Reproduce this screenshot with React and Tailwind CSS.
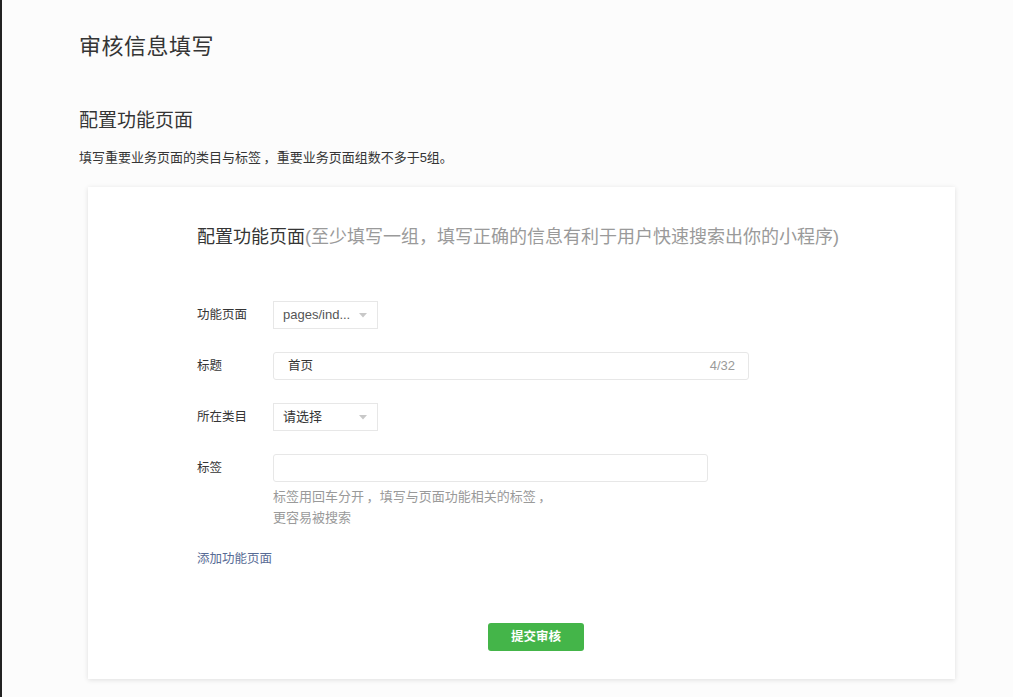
const font = { fontFamily: '"Liberation Sans", "Noto Sans CJK SC", sans-serif' };

const Comma = () => <span className="ml-[0.2em]">，</span>;

const Arrow = () => (
  <svg width="8" height="5" viewBox="0 0 8 5" className="shrink-0">
    <path d="M0 0 L8 0 L4 4.5 Z" fill="#c8c8c8" />
  </svg>
);

const Row = ({ label, children, className = "" }) => (
  <div className={`flex items-start ${className}`}>
    <div className="w-[76px] shrink-0 pt-[6px] text-[12.5px] leading-[16px] text-[#353535]">{label}</div>
    <div className="flex-1">{children}</div>
  </div>
);

const App = () => {
  return (
    <div
      className="min-h-[697px] w-full bg-[#fcfcfc] border-l-2 border-[#222] text-[#353535]"
      style={font}
    >
      <div className="pl-[77px] pr-[56px] pt-[32px]">
        <h1 className="text-[22px] leading-[30px] font-normal text-[#353535] tracking-[0.5px]">审核信息填写</h1>
        <h2 className="mt-[46px] text-[19px] leading-[26px] font-normal text-[#353535]">配置功能页面</h2>
        <p className="mt-[15px] text-[13px] leading-[18px] text-[#353535]">
          填写重要业务页面的类目与标签<Comma />重要业务页面组数不多于5组。
        </p>

        <div className="mt-[20px] ml-[9px] w-[867px] h-[492px] bg-white shadow-[0_1px_5px_rgba(0,0,0,0.12)] pl-[109px] pt-[37px]">
          <div className="text-[18px] leading-[26px]">
            <span className="text-[#353535]">配置功能页面</span>
            <span className="text-[#9a9a9a]">(至少填写一组，填写正确的信息有利于用户快速搜索出你的小程序)</span>
          </div>

          <div className="mt-[51px] flex flex-col gap-[23px]">
            <Row label="功能页面">
              <div className="flex h-[28px] w-[105px] items-center justify-between border border-[#e7e7e7] pl-[9px] pr-[10px] text-[13px] text-[#555]">
                <span>pages/ind...</span>
                <Arrow />
              </div>
            </Row>
            <Row label="标题">
              <div className="flex h-[28px] w-[476px] items-center justify-between rounded-[3px] border border-[#e7e7e7] pl-[14px] pr-[13px]">
                <span className="text-[12.5px] text-[#353535]">首页</span>
                <span className="text-[13px] text-[#9a9a9a]">4/32</span>
              </div>
            </Row>
            <Row label="所在类目">
              <div className="flex h-[28px] w-[105px] items-center justify-between border border-[#e7e7e7] pl-[9px] pr-[10px] text-[13px] text-[#353535]">
                <span>请选择</span>
                <Arrow />
              </div>
            </Row>
            <Row label="标签">
              <div className="h-[28px] w-[435px] rounded-[3px] border border-[#e7e7e7]" />
              <p className="mt-[4px] text-[13px] leading-[21px] text-[#9a9a9a]">
                标签用回车分开<Comma />填写与页面功能相关的标签<Comma />
                <br />
                更容易被搜索
              </p>
            </Row>
          </div>

          <div className="mt-[23px] text-[12.5px] leading-[16px] text-[#576b95]">添加功能页面</div>

          <div className="mt-[56px] ml-[291px]">
            <button className="h-[28px] w-[96px] rounded-[3px] bg-[#44b549] text-[12.5px] font-bold text-white">
              提交审核
            </button>
          </div>
        </div>
      </div>
    </div>
  );
};

export default App;
